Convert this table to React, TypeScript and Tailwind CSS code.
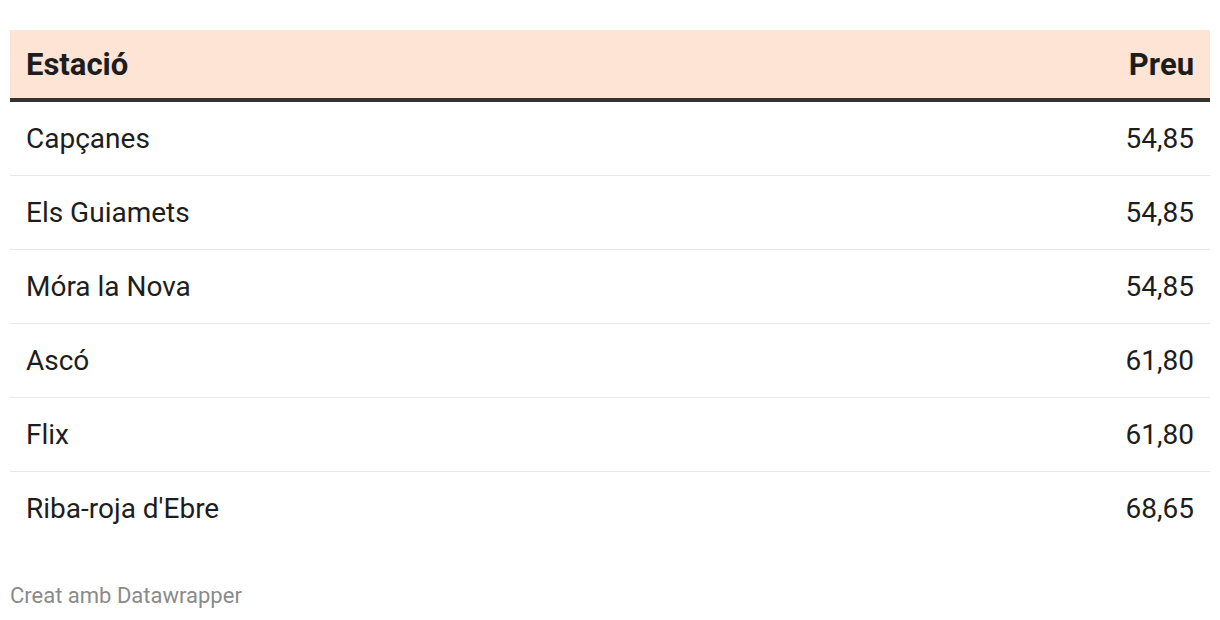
import React from "react";

const rows: [string, string][] = [
  ["Capçanes", "54,85"],
  ["Els Guiamets", "54,85"],
  ["Móra la Nova", "54,85"],
  ["Ascó", "61,80"],
  ["Flix", "61,80"],
  ["Riba-roja d'Ebre", "68,65"],
];

export default function App() {
  return (
    <div className="w-[1220px] h-[620px] bg-white px-[10px] pt-[30px] text-[#1d1d1d]" style={{ fontFamily: "Roboto, 'Liberation Sans', sans-serif" }}>
      <div className="flex items-center justify-between h-[68px] bg-[#fee4d4] px-4 border-b-[4px] border-[#333333] box-content">
        <span className="text-[31px] font-bold leading-none">Estació</span>
        <span className="text-[31px] font-bold leading-none">Preu</span>
      </div>
      {rows.map(([name, price], i) => (
        <div
          key={name}
          className={`flex items-center justify-between h-[74px] px-4 text-[28px] leading-none ${i < rows.length - 1 ? "border-b border-[#e8e8e8]" : ""}`}
        >
          <span>{name}</span>
          <span>{price}</span>
        </div>
      ))}
      <div className="mt-[39px] text-[22px] leading-none text-[#8a8a8a]">Creat amb Datawrapper</div>
    </div>
  );
}
